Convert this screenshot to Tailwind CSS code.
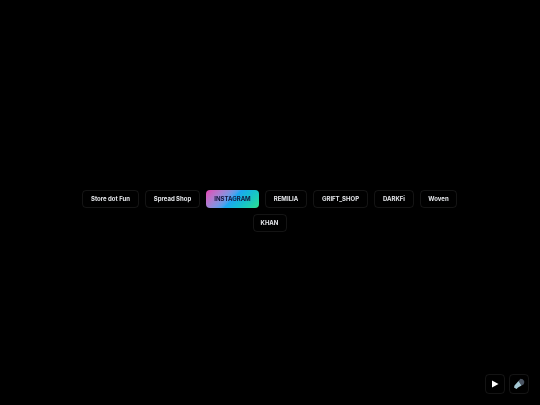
<!DOCTYPE html>
<html lang="en">
<head>
    <meta charset="UTF-8">
    <title>Links</title>
    <script src="https://cdn.jsdelivr.net/npm/@tailwindcss/browser@4"></script>
</head>
<body class="bg-black font-['Inter',sans-serif]">
    <div class="relative w-[540px] h-[405px] overflow-hidden">
        <div class="h-full flex flex-wrap justify-center content-center gap-[6px] pl-[82px] pr-[83px] pt-[17px] text-[6px] font-bold leading-[8px] text-gray-200 [will-change:transform]">
            <a class="h-[18px] w-[57px] pb-px flex items-center justify-center rounded-[4px] border border-white/[0.08]">Store dot Fun</a>
            <a class="h-[18px] w-[55px] pb-px flex items-center justify-center rounded-[4px] border border-white/[0.08]">Spread Shop</a>
            <a class="h-[18px] w-[53px] pb-px flex items-center justify-center rounded-[4px] text-[#14143c] bg-linear-135 from-[#e23fb4] via-[#1fa6f2] to-[#2fe08a]">INSTAGRAM</a>
            <a class="h-[18px] w-[42px] pb-px flex items-center justify-center rounded-[4px] border border-white/[0.08]">REMILIA</a>
            <a class="h-[18px] w-[55px] pb-px flex items-center justify-center rounded-[4px] border border-white/[0.08]">GRIFT_SHOP</a>
            <a class="h-[18px] w-[40px] pb-px flex items-center justify-center rounded-[4px] border border-white/[0.08]">DARKFi</a>
            <a class="h-[18px] w-[37px] pb-px flex items-center justify-center rounded-[4px] border border-white/[0.08]">Woven</a>
            <a class="h-[18px] w-[34px] pb-px flex items-center justify-center rounded-[4px] border border-white/[0.08]">KHAN</a>
        </div>
        <div class="absolute right-[11px] bottom-[11px] flex gap-1">
            <button class="w-5 h-5 flex items-center justify-center rounded-[4px] border border-white/[0.08]">
                <svg width="8" height="8" viewBox="0 0 8 8"><path d="M1 0.5 L7.5 4 L1 7.5 Z" fill="#fff"/></svg>
            </button>
            <button class="w-5 h-5 flex items-center justify-center rounded-[4px] border border-white/[0.08]">
                <svg width="12" height="12" viewBox="0 0 12 12">
                    <path d="M5.5 3 L7.5 0.8 Q10 0.8 11.2 3 Q11.5 5 10.5 6.5 L8.5 7.5 Z" fill="#4b5563"/>
                    <path d="M5.5 3 L8.5 7.5 L5 9.5 L3.5 11 L1 9.5 L1.5 7.5 Z" fill="#a5c8d4"/>
                </svg>
            </button>
        </div>
    </div>
</body>
</html>
